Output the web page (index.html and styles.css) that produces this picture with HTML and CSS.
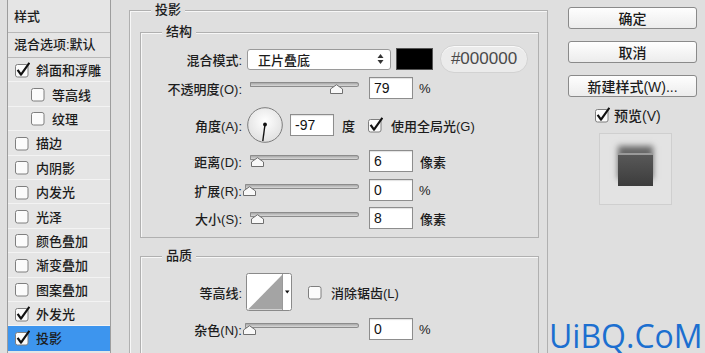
FILE: index.html
```html
<!DOCTYPE html>
<html lang="zh-CN">
<head>
    <meta charset="UTF-8">
    <title>图层样式 - 投影</title>
    <link rel="stylesheet" href="styles.css">
</head>
<body>
    <svg class="defs" width="0" height="0">
        <symbol id="box" viewBox="0 0 16 16">
            <rect x="1.5" y="2.5" width="12.5" height="12.5" rx="2" fill="#fbfbfb" stroke="#7f7f7f"/>
        </symbol>
        <symbol id="tick" viewBox="0 0 16 16">
            <path d="M3.6 7.8 L7 12.6 L15.4 0.8" fill="none" stroke="#111" stroke-width="2.2" stroke-linejoin="round"/>
        </symbol>
        <symbol id="thumb" viewBox="0 0 13 10">
            <path d="M0.5 9.5 V5 L6.5 0.7 L12.5 5 V9.5 Z" fill="#f8f8f8" stroke="#6f6f6f"/>
        </symbol>
    </svg>

    <div class="dialog">
        <!-- 左侧样式列表 -->
        <aside class="style-list">
            <div class="list-head">样式</div>
            <div class="list-blend">混合选项:默认</div>
            <div class="list-item"><svg class="cb"><use href="#box"/><use href="#tick"/></svg>斜面和浮雕</div>
            <div class="list-item indent"><svg class="cb"><use href="#box"/></svg>等高线</div>
            <div class="list-item indent"><svg class="cb"><use href="#box"/></svg>纹理</div>
            <div class="list-item"><svg class="cb"><use href="#box"/></svg>描边</div>
            <div class="list-item"><svg class="cb"><use href="#box"/></svg>内阴影</div>
            <div class="list-item"><svg class="cb"><use href="#box"/></svg>内发光</div>
            <div class="list-item"><svg class="cb"><use href="#box"/></svg>光泽</div>
            <div class="list-item"><svg class="cb"><use href="#box"/></svg>颜色叠加</div>
            <div class="list-item"><svg class="cb"><use href="#box"/></svg>渐变叠加</div>
            <div class="list-item"><svg class="cb"><use href="#box"/></svg>图案叠加</div>
            <div class="list-item"><svg class="cb"><use href="#box"/><use href="#tick"/></svg>外发光</div>
            <div class="list-item active"><svg class="cb"><use href="#box"/><use href="#tick"/></svg>投影</div>
        </aside>

        <!-- 中间设置区 -->
        <main class="settings">
            <fieldset class="group outer">
                <legend>投影</legend>

                <fieldset class="group inner structure">
                    <legend>结构</legend>

                    <div class="row r-blend">
                        <label class="lbl">混合模式:</label>
                        <div class="select">
                            <span>正片叠底</span>
                            <svg class="arrows" width="7" height="12" viewBox="0 0 7 12">
                                <polygon points="0.5,5 3.5,1 6.5,5" fill="#333"/>
                                <polygon points="0.5,7 6.5,7 3.5,11" fill="#333"/>
                            </svg>
                        </div>
                        <span class="swatch"></span>
                        <span class="hex">#000000</span>
                    </div>

                    <div class="row r-opacity">
                        <label class="lbl">不透明度(O):</label>
                        <div class="slider">
                            <div class="track"></div>
                            <svg class="thumb" style="left:79.5px"><use href="#thumb"/></svg>
                        </div>
                        <input class="num" type="text" value="79">
                        <span class="unit">%</span>
                    </div>

                    <div class="row r-angle">
                        <label class="lbl">角度(A):</label>
                        <svg class="dial" width="36" height="36" viewBox="0 0 36 36">
                            <defs>
                                <radialGradient id="dialFill" cx="50%" cy="40%" r="60%">
                                    <stop offset="0" stop-color="#ffffff"/>
                                    <stop offset="1" stop-color="#e0e0e0"/>
                                </radialGradient>
                            </defs>
                            <circle cx="18" cy="18" r="17.3" fill="url(#dialFill)" stroke="#7c7c7c"/>
                            <line x1="18" y1="17.5" x2="15.8" y2="34" stroke="#111" stroke-width="1.4"/>
                            <circle cx="18" cy="17.5" r="1.9" fill="#111"/>
                        </svg>
                        <input class="num angle" type="text" value="-97">
                        <span class="unit deg">度</span>
                        <svg class="cb global"><use href="#box"/><use href="#tick"/></svg>
                        <span class="cb-label">使用全局光(G)</span>
                    </div>

                    <div class="row r-distance">
                        <label class="lbl">距离(D):</label>
                        <div class="slider">
                            <div class="track"></div>
                            <svg class="thumb" style="left:0.5px"><use href="#thumb"/></svg>
                        </div>
                        <input class="num" type="text" value="6">
                        <span class="unit px">像素</span>
                    </div>

                    <div class="row r-spread">
                        <label class="lbl">扩展(R):</label>
                        <div class="slider wide">
                            <div class="track"></div>
                            <svg class="thumb" style="left:-2px"><use href="#thumb"/></svg>
                        </div>
                        <input class="num" type="text" value="0">
                        <span class="unit">%</span>
                    </div>

                    <div class="row r-size">
                        <label class="lbl">大小(S):</label>
                        <div class="slider">
                            <div class="track"></div>
                            <svg class="thumb" style="left:0.5px"><use href="#thumb"/></svg>
                        </div>
                        <input class="num" type="text" value="8">
                        <span class="unit px">像素</span>
                    </div>
                </fieldset>

                <fieldset class="group inner quality">
                    <legend>品质</legend>

                    <div class="row r-contour">
                        <label class="lbl">等高线:</label>
                        <svg class="contour" width="46" height="38" viewBox="0 0 46 38">
                            <rect x="0.5" y="0.5" width="45" height="37" rx="2" fill="#fff" stroke="#8a8a8a"/>
                            <polygon points="2,36.5 36,2 36,36.5" fill="#a4a4a4"/>
                            <line x1="36.5" y1="1" x2="36.5" y2="37" stroke="#9a9a9a"/>
                            <polygon points="39,17.5 43.5,17.5 41.25,20.5" fill="#111"/>
                        </svg>
                        <svg class="cb anti"><use href="#box"/></svg>
                        <span class="cb-label">消除锯齿(L)</span>
                    </div>

                    <div class="row r-noise">
                        <label class="lbl">杂色(N):</label>
                        <div class="slider wide">
                            <div class="track"></div>
                            <svg class="thumb" style="left:-2px"><use href="#thumb"/></svg>
                        </div>
                        <input class="num" type="text" value="0">
                        <span class="unit">%</span>
                    </div>
                </fieldset>
            </fieldset>
        </main>

        <!-- 右侧按钮 -->
        <div class="actions">
            <button class="btn">确定</button>
            <button class="btn">取消</button>
            <button class="btn">新建样式(W)...</button>
            <div class="preview-check">
                <svg class="cb"><use href="#box"/><use href="#tick"/></svg>
                <span>预览(V)</span>
            </div>
            <div class="preview">
                <div class="preview-square"></div>
            </div>
        </div>
    </div>

    <div class="watermark">UiBQ.CoM</div>
</body>
</html>
```

FILE: styles.css
```css
* {
    box-sizing: border-box;
}

html, body {
    margin: 0;
    height: 353px;
    overflow: hidden;
}

body {
    background: #dfdfdf;
    font-family: "Liberation Sans", "Noto Sans CJK SC", sans-serif;
    font-size: 13px;
    font-weight: 500;
    color: #1c1c1c;
    position: relative;
}

.defs {
    position: absolute;
}

.dialog {
    display: flex;
    align-items: flex-start;
    padding-left: 7px;
}

/* 左侧列表 */
.style-list {
    width: 104px;
    height: 353px;
    flex-shrink: 0;
    background: #e5e5e5;
    border-left: 1px solid #9d9d9d;
    border-right: 1px solid #9d9d9d;
}

.list-head {
    height: 33px;
    padding-left: 6px;
    display: flex;
    align-items: center;
    border-bottom: 1px solid #b8b8b8;
    padding-bottom: 2px;
}

.list-blend {
    height: 25px;
    padding-left: 6px;
    display: flex;
    align-items: center;
    border-bottom: 1px solid #b8b8b8;
    padding-bottom: 3px;
}

.list-item {
    height: 24.4px;
    display: flex;
    align-items: center;
    gap: 6px;
    padding-left: 6px;
    border-bottom: 1px solid #f3f3f3;
}

.list-item.indent {
    padding-left: 22px;
}

.list-item.active {
    background: #3d95ee;
    border-bottom-color: #3d95ee;
}

.cb {
    width: 16px;
    height: 16px;
    flex-shrink: 0;
    overflow: visible;
}

/* 中间设置 */
.settings {
    width: 419px;
    margin-left: 18px;
    flex-shrink: 0;
}

.group {
    margin: 0;
    border: 1px solid #b0b0b0;
    box-shadow: inset 1px 1px 0 #f7f7f7;
}

.group legend {
    padding: 0 4px;
    line-height: 18px;
    background: #dfdfdf;
}

.outer {
    margin-top: 1px;
    width: 419px;
    height: 356px;
    padding: 4px 8px 0 10px;
}

.outer > legend {
    margin-left: 11px;
}

.inner {
    width: 399px;
}

.inner > legend {
    margin-left: 21px;
}

.structure {
    padding: 4px 0 6px 0;
}

.quality {
    margin-top: 9px;
    padding: 8px 0 20px 0;
}

.row {
    display: flex;
    align-items: center;
}

.lbl {
    width: 101px;
    flex-shrink: 0;
    text-align: right;
}

.r-blend { height: 28px; }
.r-opacity { height: 30px; }
.r-angle { height: 44px; }
.r-distance { height: 28px; }
.r-spread { height: 30px; }
.r-size { height: 26px; }
.r-contour { height: 38px; }
.r-noise { height: 28px; margin-top: 4px; }

.select {
    width: 144px;
    height: 21px;
    margin-left: 5px;
    padding: 0 6px 0 10px;
    display: flex;
    align-items: center;
    justify-content: space-between;
    background: #fff;
    border: 1px solid #9a9a9a;
    border-radius: 3px;
}

.swatch {
    width: 37px;
    height: 22px;
    margin-left: 5px;
    background: #000;
    border: 1px solid #555;
}

.hex {
    width: 88px;
    height: 28px;
    margin-left: 7px;
    display: flex;
    align-items: center;
    justify-content: center;
    background: #ebebeb;
    border: 1px solid #d2d2d2;
    border-radius: 14px;
    box-shadow: inset 0 1px 0 #fafafa;
    font-size: 17px;
    font-weight: 400;
    color: #4a4a4a;
}

.slider {
    position: relative;
    width: 109px;
    height: 12px;
    margin-left: 8px;
    flex-shrink: 0;
}

.slider.wide {
    width: 114px;
    margin-left: 3px;
}

.track {
    height: 5px;
    border: 1px solid #8c8c8c;
    border-radius: 1px 3px 3px 1px;
    background: linear-gradient(#a8a8a8, #d9d9d9);
}

.thumb {
    position: absolute;
    top: 2px;
    width: 13px;
    height: 10px;
}

.num {
    width: 44px;
    height: 22px;
    margin: 0 0 0 10px;
    padding: 0 0 0 4px;
    background: #fff;
    border: 1px solid #8d8d8d;
    box-shadow: inset 0 1px 1px rgba(0, 0, 0, 0.12);
    font-family: inherit;
    font-size: 14px;
    color: #111;
    outline: none;
}

.unit {
    margin-left: 6px;
}

.unit.px {
    margin-left: 7px;
}

.dial {
    margin-left: 5px;
    flex-shrink: 0;
}

.num.angle {
    margin-left: 7px;
}

.unit.deg {
    margin-left: 8px;
}

.cb.global {
    margin-left: 12px;
}

.cb-label {
    margin-left: 8px;
}

.contour {
    margin-left: 4px;
    flex-shrink: 0;
}

.cb.anti {
    margin-left: 15px;
}

/* 右侧按钮 */
.actions {
    width: 129px;
    margin-left: 20px;
    flex-shrink: 0;
    display: flex;
    flex-direction: column;
    padding-top: 7px;
}

.btn {
    height: 22px;
    margin-bottom: 12px;
    padding: 0;
    background: linear-gradient(#fefefe, #ececec);
    border: 1px solid #8a8a8a;
    border-radius: 3px;
    font-family: inherit;
    font-size: 14px;
    font-weight: 500;
    color: #1a1a1a;
}

.preview-check {
    height: 18px;
    margin-top: -3px;
    padding-left: 26px;
    display: flex;
    align-items: center;
    gap: 4px;
    font-size: 14px;
}

.preview {
    width: 73px;
    height: 72px;
    margin: 9px 0 0 31px;
    display: flex;
    align-items: center;
    justify-content: center;
    background: #e3e3e3;
    border: 1px solid #cfcfcf;
}

.preview-square {
    width: 35px;
    height: 33px;
    background: linear-gradient(#585858, #3c3c3c);
    border-top: 2px solid #9a9a9a;
    box-shadow: 0 -7px 6px rgba(0, 0, 0, 0.55);
}

/* 水印 */
.watermark {
    position: absolute;
    left: 549px;
    top: 320px;
    font-family: "Open Sans", sans-serif;
    font-size: 32px;
    font-weight: 400;
    line-height: 32px;
    color: #1c6fd0;
}
```
